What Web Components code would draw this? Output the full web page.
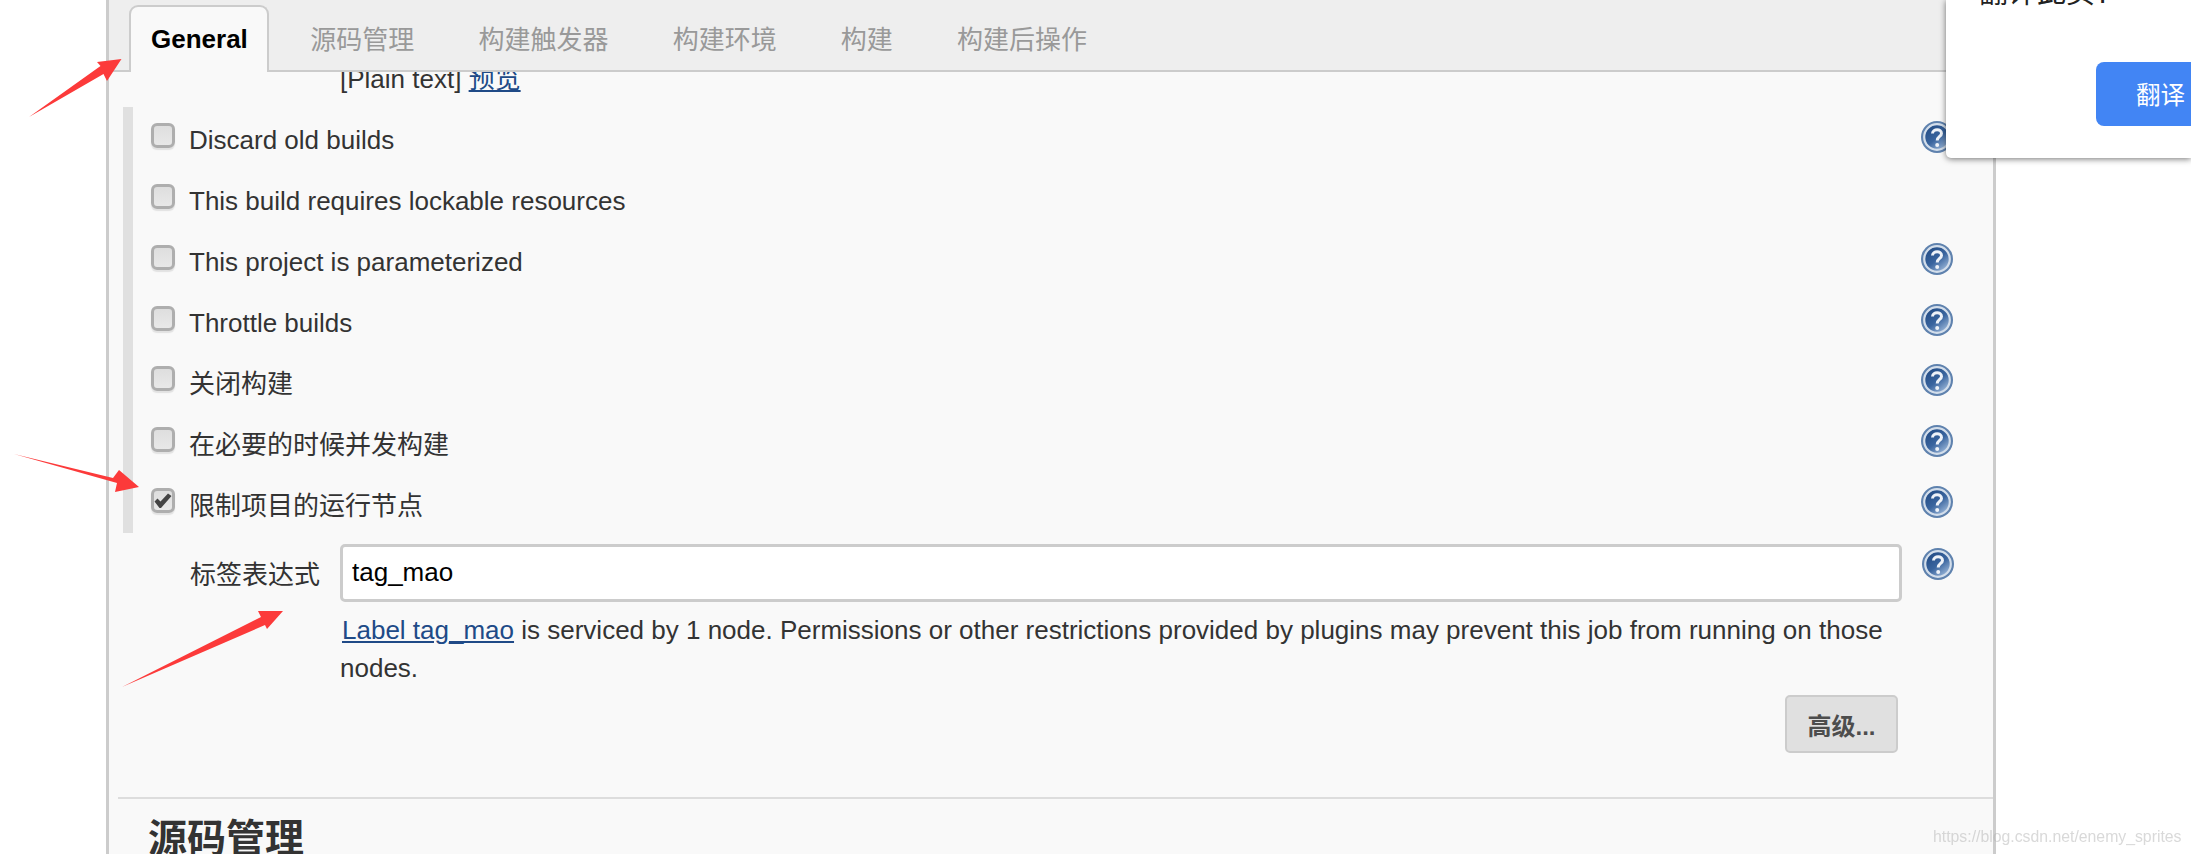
<!DOCTYPE html>
<html lang="zh">
<head>
<meta charset="utf-8">
<title>General</title>
<style>
  html, body { margin: 0; background: #fff; }
  body {
    width: 2191px;
    height: 854px;
    overflow: hidden;
    position: relative;
    font-family: "Liberation Sans", "Noto Sans CJK SC", sans-serif;
    font-size: 26px;
    color: #333;
  }
</style>
</head>
<body>
<jk-panel>
  <jk-tabs>
    <jk-tab active>General</jk-tab>
    <jk-tab>源码管理</jk-tab>
    <jk-tab>构建触发器</jk-tab>
    <jk-tab>构建环境</jk-tab>
    <jk-tab>构建</jk-tab>
    <jk-tab>构建后操作</jk-tab>
  </jk-tabs>
  <jk-clipped-line>[Plain text] <a href="#">预览</a></jk-clipped-line>
  <jk-options>
    <jk-option help>Discard old builds</jk-option>
    <jk-option>This build requires lockable resources</jk-option>
    <jk-option help>This project is parameterized</jk-option>
    <jk-option help>Throttle builds</jk-option>
    <jk-option help cjk>关闭构建</jk-option>
    <jk-option help cjk>在必要的时候并发构建</jk-option>
    <jk-option help cjk checked>限制项目的运行节点</jk-option>
  </jk-options>
  <jk-label-field label="标签表达式" value="tag_mao">
    <a href="#">Label tag_mao</a> is serviced by 1 node. Permissions or other restrictions provided by plugins may prevent this job from running on those<br>nodes.
  </jk-label-field>
  <jk-section-title>源码管理</jk-section-title>
</jk-panel>
<jk-translate-popup></jk-translate-popup>
<jk-arrow points="29,117 100.5,66 97,62 121.5,59 107,81 103.5,74"></jk-arrow>
<jk-arrow points="14,454 113,478 119,470 139,487 115,492 117,483"></jk-arrow>
<jk-arrow points="122,687 261,617 258,611 283,611 267,629 265,625"></jk-arrow>
<jk-watermark>https://blog.csdn.net/enemy_sprites</jk-watermark>

<script>
class JkPanel extends HTMLElement {
  constructor() {
    super();
    this.attachShadow({ mode: 'open' }).innerHTML = `
      <style>
        :host {
          display: block;
          box-sizing: border-box;
          width: 1890px;
          height: 854px;
          margin-left: 106px;
          background: #f9f9f9;
          border-left: 3px solid #ccc;
          border-right: 3px solid #ccc;
          overflow: hidden;
        }
      </style>
      <slot></slot>`;
  }
}

class JkTabs extends HTMLElement {
  constructor() {
    super();
    this.attachShadow({ mode: 'open' }).innerHTML = `
      <style>
        :host {
          display: flex;
          align-items: flex-end;
          box-sizing: border-box;
          height: 72px;
          padding-left: 20px;
          background: #eee;
          border-bottom: 2px solid #ccc;
        }
      </style>
      <slot></slot>`;
  }
}

class JkTab extends HTMLElement {
  constructor() {
    super();
    this.attachShadow({ mode: 'open' }).innerHTML = `
      <style>
        :host {
          display: block;
          box-sizing: border-box;
          height: 60px;
          line-height: 60px;
          padding: 0 22px;
          margin-right: 20.2px;
          font-size: 26px;
          color: #999;
        }
        :host([active]) {
          height: 67px;
          line-height: 64px;
          margin-bottom: -2px;
          margin-right: 19.4px;
          padding: 0 19px 0 20px;
          background: #f9f9f9;
          border: 2px solid #ccc;
          border-bottom: 0;
          border-radius: 9px 9px 0 0;
          font-weight: bold;
          color: #000;
        }
      </style>
      <slot></slot>`;
  }
}

class JkClippedLine extends HTMLElement {
  constructor() {
    super();
    this.attachShadow({ mode: 'open' }).innerHTML = `
      <style>
        :host {
          display: block;
          height: 35px;
          overflow: hidden;
          padding-left: 231px;
          line-height: 38px;
        }
        div { margin-top: -12px; }
        ::slotted(a) { color: #204a87; }
      </style>
      <div><slot></slot></div>`;
  }
}

class JkOptions extends HTMLElement {
  constructor() {
    super();
    this.attachShadow({ mode: 'open' }).innerHTML = `
      <style>
        :host {
          display: grid;
          grid-auto-rows: 60.86px;
          margin-left: 14px;
          border-left: 10px solid #e0e0e0;
        }
      </style>
      <slot></slot>`;
  }
}

class JkOption extends HTMLElement {
  constructor() {
    super();
    const checked = this.hasAttribute('checked');
    const help = this.hasAttribute('help');
    this.attachShadow({ mode: 'open' }).innerHTML = `
      <style>
        :host {
          display: flex;
          align-items: flex-start;
          padding: 0 40px 0 18px;
        }
        .label { margin-left: 14px; margin-top: 15px; line-height: 37px; }
        :host([cjk]) .label { margin-top: 16px; }
        jk-checkbox { margin-top: 16px; }
        jk-help { margin-left: auto; margin-top: 14px; }
      </style>
      <jk-checkbox ${checked ? 'checked' : ''}></jk-checkbox>
      <div class="label"><slot></slot></div>
      ${help ? '<jk-help></jk-help>' : ''}`;
  }
}

class JkCheckbox extends HTMLElement {
  constructor() {
    super();
    const mark = this.hasAttribute('checked')
      ? '<svg width="18" height="16" viewBox="0 0 18 16"><path d="M0.5 8.5 L3.5 5.5 L6.5 8.5 L14 0.5 L17.5 3 L7 15 L5.5 15 Z" fill="#444"/></svg>'
      : '';
    this.attachShadow({ mode: 'open' }).innerHTML = `
      <style>
        :host {
          display: flex;
          align-items: center;
          justify-content: center;
          flex: none;
          box-sizing: border-box;
          width: 24px;
          height: 25px;
          background: linear-gradient(#dedede, #e8e8e8);
          border: 3px solid #aeaeae;
          border-radius: 6px;
          box-shadow: 0 2px 1px #e2e2e2;
        }
        svg { flex: none; }
      </style>
      ${mark}`;
  }
}

class JkHelp extends HTMLElement {
  constructor() {
    super();
    this.attachShadow({ mode: 'open' }).innerHTML = `
      <style>
        :host { display: block; flex: none; width: 32px; height: 32px; }
        svg { display: block; }
      </style>
      <svg width="32" height="32" viewBox="0 0 32 32">
        <defs>
          <linearGradient id="g" x1="0.2" y1="0.1" x2="0.85" y2="0.95">
            <stop offset="0" stop-color="#264f88"/>
            <stop offset="0.5" stop-color="#3a659f"/>
            <stop offset="1" stop-color="#9ab6d8"/>
          </linearGradient>
        </defs>
        <circle cx="16" cy="16" r="16" fill="#5f82ae"/>
        <circle cx="16" cy="16" r="12" fill="url(#g)"/>
        <circle cx="16" cy="16" r="12.8" fill="none" stroke="#d3deeb" stroke-width="2.2"/>
        <path d="M11.5 12.5 C11.8 7.5 20.5 7.5 20.5 12.5 C20.5 15.5 16.2 15.5 16.2 19.5" fill="none" stroke="#eef2f8" stroke-width="3"/>
        <circle cx="16.2" cy="24" r="2" fill="#eef2f8"/>
      </svg>`;
  }
}

class JkLabelField extends HTMLElement {
  constructor() {
    super();
    this.attachShadow({ mode: 'open' }).innerHTML = `
      <style>
        :host {
          display: grid;
          grid-template-columns: 150px 1562px 32px;
          padding: 11px 0 0 81px;
        }
        .name { align-self: center; margin-top: -2px; }
        input {
          box-sizing: border-box;
          width: 100%;
          height: 58px;
          padding: 0 9px 1px;
          font: 26px "Liberation Sans", "Noto Sans CJK SC", sans-serif;
          color: #000;
          background: #fff;
          border: 3px solid #ccc;
          border-radius: 5px;
          outline: none;
        }
        jk-help { margin: 4px 0 0 20px; }
        .note {
          grid-column: 2;
          margin-top: 9px;
          line-height: 38px;
          width: 1560px;
        }
        ::slotted(a) { color: #204a87; padding-left: 2px; }
        .actions {
          grid-column: 2;
          display: flex;
          justify-content: flex-end;
          padding: 8px 4px 0 0;
        }
        .rule {
          grid-column: 1 / -1;
          height: 2px;
          margin: 44px -62px 0 -72px;
          background: #ddd;
        }
      </style>
      <div class="name"></div>
      <input type="text">
      <jk-help></jk-help>
      <div class="note"><slot></slot></div>
      <div class="actions"><jk-button>高级...</jk-button></div>
      <div class="rule"></div>`;
    this.shadowRoot.querySelector('.name').textContent = this.getAttribute('label');
    this.shadowRoot.querySelector('input').setAttribute('value', this.getAttribute('value'));
  }
}

class JkButton extends HTMLElement {
  constructor() {
    super();
    this.attachShadow({ mode: 'open' }).innerHTML = `
      <style>
        :host {
          display: flex;
          align-items: center;
          justify-content: center;
          box-sizing: border-box;
          width: 113px;
          height: 58px;
          background: #e0e0e0;
          border: 2px solid #ccc;
          border-radius: 5px;
          font-size: 24px;
          font-weight: bold;
          color: #4d4d4d;
        }
      </style>
      <slot></slot>`;
  }
}

class JkSectionTitle extends HTMLElement {
  constructor() {
    super();
    this.attachShadow({ mode: 'open' }).innerHTML = `
      <style>
        :host {
          display: block;
          padding: 12px 0 0 39px;
          font-size: 39px;
          line-height: 56px;
          font-weight: bold;
          color: #333;
        }
      </style>
      <slot></slot>`;
  }
}

class JkTranslatePopup extends HTMLElement {
  constructor() {
    super();
    this.attachShadow({ mode: 'open' }).innerHTML = `
      <style>
        :host {
          position: absolute;
          top: 0;
          right: 0;
          box-sizing: border-box;
          width: 245px;
          height: 158px;
          padding-left: 33px;
          background: #fff;
          border-radius: 0 0 0 5px;
          box-shadow: 0 1px 6px rgba(0, 0, 0, 0.55);
          overflow: hidden;
        }
        .ask {
          margin-top: -25px;
          height: 36px;
          line-height: 36px;
          font-size: 29px;
          color: #222;
        }
        .go {
          box-sizing: border-box;
          width: 100px;
          height: 64px;
          margin: 51px 0 0 117px;
          padding-left: 40px;
          background: #4285f4;
          border-radius: 8px 0 0 8px;
          font-size: 24.5px;
          line-height: 68px;
          color: #fff;
        }
      </style>
      <div class="ask">翻译此页?</div>
      <div class="go">翻译</div>`;
  }
}

class JkArrow extends HTMLElement {
  constructor() {
    super();
    this.attachShadow({ mode: 'open' }).innerHTML = `
      <style>
        :host { position: absolute; top: 0; left: 0; pointer-events: none; }
        svg { display: block; }
      </style>
      <svg width="300" height="700"><polygon points="${this.getAttribute('points')}" fill="#fc3a3a"/></svg>`;
  }
}

class JkWatermark extends HTMLElement {
  constructor() {
    super();
    this.attachShadow({ mode: 'open' }).innerHTML = `
      <style>
        :host {
          position: absolute;
          left: 1933px;
          top: 826px;
          font-size: 15.8px;
          line-height: 22px;
          color: rgba(180, 180, 180, 0.5);
          white-space: nowrap;
          filter: blur(0.4px);
        }
      </style>
      <slot></slot>`;
  }
}

customElements.define('jk-panel', JkPanel);
customElements.define('jk-tabs', JkTabs);
customElements.define('jk-tab', JkTab);
customElements.define('jk-clipped-line', JkClippedLine);
customElements.define('jk-options', JkOptions);
customElements.define('jk-option', JkOption);
customElements.define('jk-checkbox', JkCheckbox);
customElements.define('jk-help', JkHelp);
customElements.define('jk-label-field', JkLabelField);
customElements.define('jk-button', JkButton);
customElements.define('jk-section-title', JkSectionTitle);
customElements.define('jk-translate-popup', JkTranslatePopup);
customElements.define('jk-arrow', JkArrow);
customElements.define('jk-watermark', JkWatermark);
</script>
</body>
</html>
